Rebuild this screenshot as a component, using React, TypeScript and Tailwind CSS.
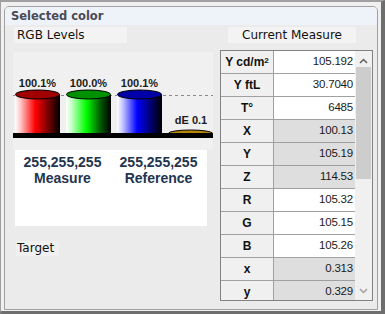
const rows: { label: React.ReactNode; value: string; shaded: boolean }[] = [
  { label: <>Y cd/m<sup className="text-[8px] relative -top-[1px]">2</sup></>, value: '105.192', shaded: false },
  { label: 'Y ftL', value: '30.7040', shaded: false },
  { label: 'T°', value: '6485', shaded: false },
  { label: 'X', value: '100.13', shaded: true },
  { label: 'Y', value: '105.19', shaded: true },
  { label: 'Z', value: '114.53', shaded: true },
  { label: 'R', value: '105.32', shaded: false },
  { label: 'G', value: '105.15', shaded: false },
  { label: 'B', value: '105.26', shaded: false },
  { label: 'x', value: '0.313', shaded: true },
  { label: 'y', value: '0.329', shaded: true },
]

const bars = [
  { id: 'r', x: 2, top: '#a00000', mid: '#ff0000', light: '#ffc8c8', dark: '#700000', label: '100.1%' },
  { id: 'g', x: 53, top: '#009000', mid: '#00ff00', light: '#c8ffc8', dark: '#006000', label: '100.0%' },
  { id: 'b', x: 104, top: '#0000a8', mid: '#0000ff', light: '#c8c8ff', dark: '#000070', label: '100.1%' },
]

function Chart() {
  return (
    <svg width="200" height="98" viewBox="0 0 200 98" className="block">
      <defs>
        {bars.map(b => (
          <linearGradient key={b.id} id={`grad-${b.id}`} x1="0" x2="1" y1="0" y2="0">
            <stop offset="0" stopColor="#ffffff" />
            <stop offset="0.12" stopColor={b.light} />
            <stop offset="0.45" stopColor={b.mid} />
            <stop offset="0.75" stopColor={b.dark} />
            <stop offset="1" stopColor="#000000" />
          </linearGradient>
        ))}
      </defs>
      <line x1="0" y1="43.5" x2="200" y2="43.5" stroke="#8a8a8a" strokeDasharray="3 3" />
      {bars.map(b => (
        <g key={b.id}>
          <rect x={b.x} y="42.5" width="45" height="39" fill={`url(#grad-${b.id})`} />
          <ellipse cx={b.x + 22.5} cy="42.5" rx="22" ry="4.5" fill={b.top} stroke="#000" strokeWidth="1" />
          <text
            x={b.x + 22.5}
            y="35"
            textAnchor="middle"
            fontFamily="'Liberation Sans', Arial, sans-serif"
            fontWeight="bold"
            fontSize="11"
            fill="#1c1c1c"
          >
            {b.label}
          </text>
        </g>
      ))}
      <ellipse cx="177.5" cy="81.5" rx="22" ry="3.5" fill="#b8860b" stroke="#000" strokeWidth="1" />
      <text
        x="178"
        y="71.5"
        textAnchor="middle"
        fontFamily="'Liberation Sans', Arial, sans-serif"
        fontWeight="bold"
        fontSize="11"
        fill="#1c1c1c"
      >
        dE 0.1
      </text>
      <rect x="0" y="81" width="200" height="5" fill="#000" />
    </svg>
  )
}

export default function App() {
  return (
    <div
      className="w-[385px] h-[314px] flex bg-[#f0f0f0] border-t-2 border-l border-r-4 border-b-[3px] border-t-[#a0a0a0] border-l-[#a0a0a0] border-r-[#6e6e6e] border-b-[#6e6e6e] pl-[3px] pt-[4px] pr-[3px] pb-[1px] overflow-hidden"
      style={{ fontFamily: "'DejaVu Sans', Verdana, sans-serif" }}
    >
      <div className="flex-1 flex flex-col border border-[#a0a0a0] rounded-t-[5px] bg-[#ebebeb] overflow-hidden">
        {/* header */}
        <div className="h-[18px] shrink-0 bg-[#eef3fa] pl-[6px] text-[11.5px] font-bold leading-[18px] text-[#4a4a55]">
          Selected color
        </div>

        <div className="flex flex-1 pl-[8px]">
          {/* left: levels */}
          <div className="w-[207px] flex flex-col">
            <div className="mt-[2px] ml-[1px] w-[113px] h-[16px] bg-[#f3f3f3] pl-[3px] text-[12px] leading-[16px] text-[#111]">
              RGB Levels
            </div>
            <div className="mt-[9px] bg-[#f0f0f0] w-[200px]">
              <Chart />
            </div>
            <div
              className="ml-[2px] w-[192px] h-[76px] bg-white flex pt-[4px] text-[14px] font-bold leading-[16px] text-[#1f3550]"
              style={{ fontFamily: "'Liberation Sans', Arial, sans-serif" }}
            >
              <div className="w-[95px] flex flex-col items-center">
                <span>255,255,255</span>
                <span>Measure</span>
              </div>
              <div className="w-[97px] flex flex-col items-center">
                <span>255,255,255</span>
                <span>Reference</span>
              </div>
            </div>
            <div className="mt-[15px] ml-[3px] w-[43px] h-[15px] bg-[#f0f0f0] pl-[1px] text-[12px] leading-[15px] text-[#111]">
              Target
            </div>
          </div>

          {/* right: current measure */}
          <div className="w-[153px] flex flex-col">
            <div className="mt-[2px] ml-[8px] w-[128px] h-[16px] bg-[#f3f3f3] text-center text-[12px] leading-[16px] text-[#111]">
              Current Measure
            </div>
            <div className="mt-[7px] h-[251px] flex border border-[#828282] bg-[#f0f0f0] overflow-hidden">
              <div className="w-[134px] flex flex-col" style={{ fontFamily: "'Liberation Sans', Arial, sans-serif" }}>
                {rows.map((r, i) => (
                  <div key={i} className="h-[23px] shrink-0 flex border-b border-[#a0a0a0]">
                    <div className="w-[53px] flex items-center justify-center bg-[#f0f0f0] border-r border-[#a0a0a0] text-[12px] font-bold text-[#111]">
                      {r.label}
                    </div>
                    <div
                      className={`flex-1 flex items-center justify-end pr-[2px] text-[11.5px] tracking-[-0.2px] text-[#1a1a1a] ${r.shaded ? 'bg-[#dedede]' : 'bg-white'}`}
                    >
                      {r.value}
                    </div>
                  </div>
                ))}
              </div>
              {/* scrollbar */}
              <div className="w-[17px] flex flex-col items-center bg-[#f0f0f0]">
                <svg width="9" height="6" viewBox="0 0 9 6" className="mt-[7px]">
                  <path d="M1 5 L4.5 1.5 L8 5" fill="none" stroke="#606060" strokeWidth="1.5" />
                </svg>
                <div className="mt-[3px] w-[15px] h-[112px] bg-[#cdcdcd]" />
                <div className="flex-1" />
                <svg width="9" height="6" viewBox="0 0 9 6" className="mb-[6px]">
                  <path d="M1 1 L4.5 4.5 L8 1" fill="none" stroke="#a0a0a0" strokeWidth="1.5" />
                </svg>
              </div>
            </div>
          </div>
        </div>
      </div>
    </div>
  )
}
